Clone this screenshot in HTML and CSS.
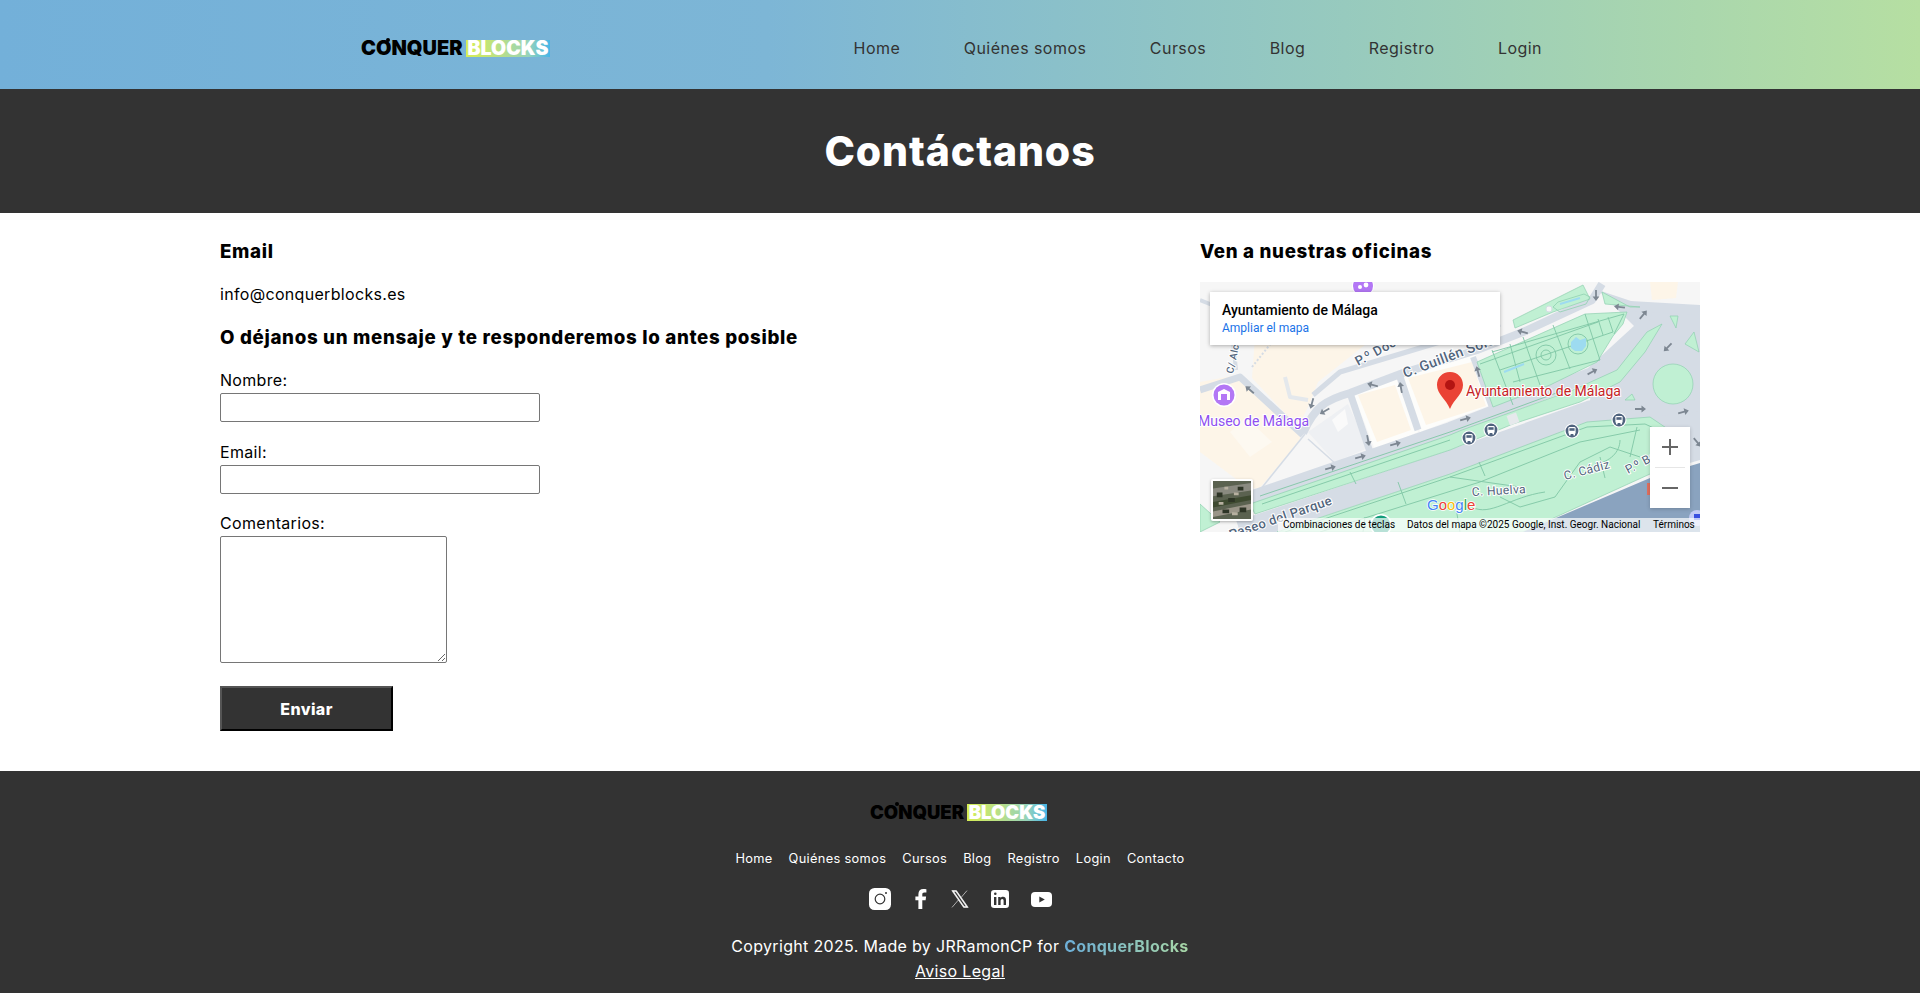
FILE: index.html
```html
<!DOCTYPE html>
<html lang="es">
<head>
    <title>Contacto - ConquerBlocks</title>
    <meta charset="UTF-8">
    <meta name="viewport" content="width=device-width, initial-scale=1.0">
    <link rel="stylesheet" href="styles.css">
</head>
<body>
    <header class="topbar">
        <a class="logo" href="#"><span class="logo-dark">CONQUER</span><span class="logo-box">BLOCKS</span></a>
        <nav class="main-nav">
            <a href="#">Home</a>
            <a href="#">Quiénes somos</a>
            <a href="#">Cursos</a>
            <a href="#">Blog</a>
            <a href="#">Registro</a>
            <a href="#">Login</a>
        </nav>
    </header>

    <div class="page-title">
        <h1>Contáctanos</h1>
    </div>

    <main class="content">
        <section class="contact-col">
            <h3>Email</h3>
            <p class="mail">info@conquerblocks.es</p>
            <h3 class="form-title">O déjanos un mensaje y te responderemos lo antes posible</h3>
            <form>
                <div class="field">
                    <label for="nombre">Nombre:</label>
                    <input id="nombre" type="text">
                </div>
                <div class="field">
                    <label for="email">Email:</label>
                    <input id="email" type="email">
                </div>
                <div class="field">
                    <label for="comentarios">Comentarios:</label>
                    <textarea id="comentarios"></textarea>
                </div>
                <button type="button" class="send">Enviar</button>
            </form>
        </section>

        <section class="office-col">
            <h3>Ven a nuestras oficinas</h3>
            <div class="map">
                <svg class="map-art" viewBox="0 0 500 250" width="500" height="250">
                    <defs>
                        <path id="arr" d="M-5 -.9H1.5V-3.4L6 0 1.5 3.4V.9H-5Z" fill="#7d8792"/>
                        <g id="bus">
                            <circle r="7.5" fill="#fff"/>
                            <circle r="6.4" fill="#4f637e"/>
                            <rect x="-3.6" y="-4" width="7.2" height="7" rx="1.2" fill="#fff"/>
                            <rect x="-2.6" y="-2.8" width="5.2" height="2.6" fill="#4f637e"/>
                            <rect x="-3" y="3" width="1.6" height="1.4" fill="#fff"/>
                            <rect x="1.4" y="3" width="1.6" height="1.4" fill="#fff"/>
                        </g>
                    </defs>

                    <rect width="500" height="250" fill="#f6f6f6"/>

                    <!-- manzanas -->
                    <polygon points="0,100 38,93 100,150 100,158 58,208 40,200 0,170" fill="#fdf5e8"/>
                    <polygon points="55,55 175,55 118,100 108,125 98,145 52,96" fill="#fdf5e8"/>
                    <polygon points="450,0 478,0 476,16 452,18" fill="#fdf5e8"/>
                    <polygon points="30,150 46,135 72,160 50,175" fill="#fdf9f1"/>
                    <polygon points="108,150 148,122 168,166 135,180" fill="#eef0f3"/>
                    <polygon points="132,138 145,127 148,142 138,150" fill="#fafafa"/>
                    <polygon points="152,108 198,96 218,150 175,168" fill="#fdfdfb"/>
                    <polygon points="158,113 195,103 211,148 177,160" fill="#fdf5e8"/>
                    <polygon points="203,92 275,72 293,122 220,150" fill="#fdfdfb"/>
                    <polygon points="208,96 272,80 286,124 226,143" fill="#fdf5e8"/>

                    <!-- calles -->
                    <g fill="none" stroke="#d5dce5" stroke-linejoin="round">
                        <polygon points="398,8 440,22 500,25 500,178 452,192 388,142 392,96 440,50" fill="#d5dce5" stroke="none"/>
                        <path d="M40 250 250 180 390 130 500 118" stroke-width="23"/>
                        <path d="M50 216 250 147 392 92 440 48 445 30" stroke-width="14"/>
                        <path d="M103 151C115 125 125 118 150 111L203 91 277 68 323 50 392 18 402 2" stroke-width="8"/>
                        <path d="M150 111 170 170" stroke-width="7"/>
                        <path d="M200 95 218 148" stroke-width="7"/>
                        <path d="M273 75 293 128" stroke-width="6"/>
                        <path d="M0 108 40 95 103 153" stroke-width="7"/>
                        <path d="M105 152 60 208" stroke-width="1.5"/>
                        <path d="M108 157 136 182" stroke-width="1.5"/>
                        <path d="M113 113 140 90 250 57 300 42" stroke-width="5"/>
                        <path d="M430 24 500 28" stroke-width="10"/>
                        <path d="M30 30 36 88" stroke-width="4"/>
                        <path d="M0 18 30 30" stroke-width="4"/>
                        <path d="M85 95 90 115 108 118" stroke-width="4" stroke="#e4e8ec"/>
                        <path d="M52 85 72 60" stroke-width="2" stroke-dasharray="2 2"/>
                    </g>

                    <!-- parques -->
                    <g fill="#c0f0d3" stroke="#8fd0b0" stroke-width=".7">
                        <polygon points="277,80 385,32 427,30 423,42 413,54 397,80 350,103 293,125"/>
                        <polygon points="313,38 383,3 390,17 353,30 315,46"/>
                        <polygon points="402,10 430,25 440,25 405,22"/>
                        <polygon points="462,42 447,50 417,88 373,108 262,148 250,153 50,222 55,232 250,168 313,142 380,120 420,100 445,70"/>
                        <polygon points="77,250 250,192 387,140 450,135 490,162 450,192 323,250"/>
                        <polygon points="0,222 20,240 0,250"/>
                        <polygon points="425,118 432,112 435,118"/>
                        <circle cx="473" cy="102" r="20"/>
                        <polygon points="485,62 494,50 499,70"/>
                        <polygon points="470,34 478,34 476,46"/>
                    </g>
                    <polygon points="323,250 450,196 500,181 500,250" fill="#8aa3bf"/>

                    <!-- sendas -->
                    <g fill="none" stroke="#7fc6a5" stroke-width=".9">
                        <path d="M292 70 424 32 414 52"/>
                        <path d="M280 82 398 40"/>
                        <path d="M300 88 413 50"/>
                        <path d="M313 100 400 78"/>
                        <path d="M292 68 313 123"/>
                        <path d="M310 62 320 100"/>
                        <path d="M323 55 340 103"/>
                        <path d="M353 43 370 87"/>
                        <path d="M385 32 400 78"/>
                        <path d="M398 37 403 53"/>
                        <path d="M408 35 413 50"/>
                        <circle cx="346" cy="73" r="10"/>
                        <circle cx="346" cy="73" r="5"/>
                        <circle cx="378" cy="62" r="10"/>
                        <path d="M60 214 250 150 370 106"/>
                        <path d="M62 222 250 158"/>
                        <path d="M150 190 156 202"/>
                        <path d="M85 250 250 195 387 145 445 142 480 158"/>
                        <path d="M120 250 280 200 380 160 440 148"/>
                        <path d="M163 250 165 235 M260 250 255 220 M300 215 320 225 355 215 380 180 410 165 440 175 M250 195 320 205 M405 196 400 175"/>
                        <path d="M420 158C420 170 410 180 395 182 M437 145 430 175"/>
                        <path d="M279 180 285 194 M198 200 206 222"/>
                        <path d="M272 225C290 235 310 215 345 210"/>
                    </g>
                    <g fill="none" stroke="#9ddbf0">
                        <path d="M304 90 324 82" stroke-width="2"/>
                        <path d="M360 22 380 16" stroke-width="2"/>
                    </g>
                    <path d="M371 60 376 55 380 58 386 56 386 64 382 69 375 69 371 66Z" fill="#9ddbf0"/>
                    <path d="M353 25 358 20 384 12 390 15 386 22 360 30Z" fill="none" stroke="#8fd0b0" stroke-width=".8"/>
                    <circle cx="349" cy="27" r="3" fill="#f6f6f6" stroke="#d5dce5"/>
                    <rect x="308" y="132" width="10" height="10" fill="#e6e9ec" transform="rotate(-20 313 137)"/>
                    <rect x="447" y="201" width="4" height="12" fill="#e0705f"/>
                    <circle cx="497" cy="236" r="8" fill="#c4cbf5"/>
                    <rect x="494" y="232" width="6" height="6" fill="#3b50e0"/>

                    <!-- flechas -->
                    <use href="#arr" transform="translate(173 103) rotate(195)"/>
                    <use href="#arr" transform="translate(201 106) rotate(-100)"/>
                    <use href="#arr" transform="translate(265 137) rotate(-15)"/>
                    <use href="#arr" transform="translate(392 90) rotate(-28)"/>
                    <use href="#arr" transform="translate(323 50) rotate(195)"/>
                    <use href="#arr" transform="translate(278 90) rotate(-105)"/>
                    <use href="#arr" transform="translate(420 25) rotate(188)"/>
                    <use href="#arr" transform="translate(443 33) rotate(-50)"/>
                    <use href="#arr" transform="translate(396 13) rotate(90)"/>
                    <use href="#arr" transform="translate(468 65) rotate(135)"/>
                    <use href="#arr" transform="translate(440 127)"/>
                    <use href="#arr" transform="translate(483 130) rotate(-15)"/>
                    <use href="#arr" transform="translate(497 160) rotate(50)"/>
                    <use href="#arr" transform="translate(168 158) rotate(80)"/>
                    <use href="#arr" transform="translate(195 162) rotate(-15)"/>
                    <use href="#arr" transform="translate(160 175) rotate(-15)"/>
                    <use href="#arr" transform="translate(130 186) rotate(-15)"/>
                    <use href="#arr" transform="translate(125 129) rotate(150)"/>
                    <use href="#arr" transform="translate(112 121) rotate(105)"/>
                    <use href="#arr" transform="translate(50 108) rotate(220)"/>

                    <!-- rotulos -->
                    <text class="map-street big" x="205" y="96" transform="rotate(-20.7 205 96)">C. Guillén Soler</text>
                    <text class="map-street" x="158" y="84" transform="rotate(-28 158 84)">P.º Doctor</text>
                    <text class="map-street small" x="33" y="92" transform="rotate(-78 33 92)">C/ Alcazabilla</text>
                    <text class="map-street" x="133" y="222" text-anchor="end" transform="rotate(-19 133 222)">Paseo del Parque</text>
                    <text class="map-street light" x="272" y="214" transform="rotate(-3 272 214)">C. Huelva</text>
                    <text class="map-street light" x="365" y="198" transform="rotate(-15 365 198)">C. Cádiz</text>
                    <text class="map-street light" x="428" y="192" transform="rotate(-28 428 192)">P.º Bajo</text>
                    <text class="map-label red" x="266" y="114">Ayuntamiento de Málaga</text>
                    <text class="map-label purple" x="-2" y="144">Museo de Málaga</text>

                    <!-- pines -->
                    <circle cx="24" cy="113" r="12" fill="#fff"/>
                    <circle cx="24" cy="113" r="10.5" fill="#b377f5"/>
                    <path d="M18 110 24 107 30 110V118H18Z" fill="#fff"/>
                    <rect x="21" y="112" width="6" height="6" fill="#b377f5"/>
                    <circle cx="163" cy="4" r="11" fill="#fff"/>
                    <circle cx="163" cy="4" r="10" fill="#b377f5"/>
                    <circle cx="160" cy="5" r="2" fill="#fff"/>
                    <circle cx="166" cy="3" r="2.4" fill="#fff"/>
                    <path d="M250 90C242 90 237 96 237 103 237 112 246 117 250 127 254 117 263 112 263 103 263 96 258 90 250 90Z" fill="#ea4335"/>
                    <circle cx="250" cy="103" r="5" fill="#b31412"/>
                    <use href="#bus" x="269" y="156"/>
                    <use href="#bus" x="291" y="148"/>
                    <use href="#bus" x="372" y="149"/>
                    <use href="#bus" x="419" y="138"/>
                    <circle cx="181" cy="243" r="11" fill="#fff"/>
                    <circle cx="181" cy="243" r="9.5" fill="#129c7a"/>
                    <text class="map-google" x="227" y="228"><tspan fill="#4285f4">G</tspan><tspan fill="#ea4335">o</tspan><tspan fill="#fbbc05">o</tspan><tspan fill="#4285f4">g</tspan><tspan fill="#34a853">l</tspan><tspan fill="#ea4335">e</tspan></text>
                </svg>

                <div class="map-card">
                    <strong>Ayuntamiento de Málaga</strong>
                    <a href="#">Ampliar el mapa</a>
                </div>

                <div class="map-thumb">
                    <svg viewBox="0 0 40 40" width="38" height="38">
                        <rect width="40" height="40" fill="#5b6250"/>
                        <path d="M0 8 40 2V10L0 16Z" fill="#8a8a80"/>
                        <path d="M0 22 40 15V20L0 28Z" fill="#3e4a30"/>
                        <path d="M0 32 40 24V30L0 38Z" fill="#9a9588"/>
                        <path d="M4 12h6v5H4ZM16 18h7v4h-7ZM26 6h6v4h-6ZM10 30h7v4h-7ZM28 28h7v5h-7Z" fill="#2e3526"/>
                        <path d="M12 6h4v3h-4ZM22 12h5v3h-5ZM6 22h5v3H6ZM20 33h6v3h-6Z" fill="#b7b0a0"/>
                    </svg>
                </div>

                <div class="map-zoom">
                    <button type="button" aria-label="Acercar">
                        <svg viewBox="0 0 18 18" width="18" height="18"><path d="M8 1h2v7h7v2h-7v7H8v-7H1V8h7Z" fill="#666"/></svg>
                    </button>
                    <span class="map-zoom-sep"></span>
                    <button type="button" aria-label="Alejar">
                        <svg viewBox="0 0 18 18" width="18" height="18"><path d="M1 8h16v2H1Z" fill="#666"/></svg>
                    </button>
                </div>

                <div class="map-attr">
                    <span class="attr-keys">Combinaciones de teclas</span>
                    <span class="attr-data">Datos del mapa ©2025 Google, Inst. Geogr. Nacional</span>
                    <span class="attr-terms">Términos</span>
                </div>
            </div>
        </section>
    </main>

    <footer class="site-footer">
        <a class="logo logo-small" href="#"><span class="logo-dark">CONQUER</span><span class="logo-box">BLOCKS</span></a>
        <nav class="footer-nav">
            <a href="#">Home</a>
            <a href="#">Quiénes somos</a>
            <a href="#">Cursos</a>
            <a href="#">Blog</a>
            <a href="#">Registro</a>
            <a href="#">Login</a>
            <a href="#">Contacto</a>
        </nav>
        <div class="social">
            <a href="#" aria-label="Instagram">
                <svg viewBox="0 0 22 22" width="22" height="22"><rect width="22" height="22" rx="5.5" fill="#fff"/><circle cx="11" cy="11" r="4.8" fill="none" stroke="#333" stroke-width="1.2"/><circle cx="17" cy="5" r="1" fill="#333"/></svg>
            </a>
            <a href="#" aria-label="Facebook">
                <svg viewBox="0 0 12 20" width="12" height="20"><path d="M3.4 20V11.2H.4V7.6h3V5.2C3.4 1.9 5.3 0 8.3 0c1.4 0 2.7.1 3.1.2v3.3H9.300c-1.500 0-2 .8-2 2v2.100h3.800l-.5 3.600H7.300V20Z" fill="#fff"/></svg>
            </a>
            <a href="#" aria-label="X">
                <svg viewBox="0 0 18 18" width="18" height="18"><path d="M.8.6H5.400L17.200 17.400H12.600ZM2.700 1.600 13.100 16.400H15.300L4.900 1.600ZM16 .6 10.200 7.400M1 17.400 7.400 10" fill="#fff" fill-rule="evenodd" stroke="#fff" stroke-width=".6"/></svg>
            </a>
            <a href="#" aria-label="LinkedIn">
                <svg viewBox="0 0 18 18" width="18" height="18"><rect width="18" height="18" rx="3.200" fill="#fff"/><path d="M3 7h2.400v8H3ZM3 3.700a1.300 1.300 0 1 1 2.600 0 1.300 1.300 0 0 1-2.600 0ZM7.200 7h2.300v1.100C10 7.300 11 6.800 12 6.800c2.200 0 3 1.400 3 3.600V15h-2.400v-4.100c0-1.200-.4-1.900-1.300-1.900-1 0-1.700.7-1.700 2V15H7.200Z" fill="#333"/></svg>
            </a>
            <a href="#" aria-label="YouTube">
                <svg viewBox="0 0 21 15" width="21" height="15"><rect width="21" height="15" rx="4" fill="#fff"/><path d="M8.300 4.400 13.800 7.500 8.300 10.600Z" fill="#333"/></svg>
            </a>
        </div>
        <p class="copy">Copyright 2025. Made by JRRamonCP for <span class="brand">ConquerBlocks</span></p>
        <a class="legal" href="#">Aviso Legal</a>
    </footer>
</body>
</html>
```

FILE: styles.css
```css
* {
    box-sizing: border-box;
}
html, body {
    margin: 0;
    padding: 0;
}
body {
    font-family: Inter, "Open Sans", sans-serif;
    font-size: 16px;
    line-height: 24px;
    letter-spacing: .32px;
    color: #000;
    background: #fff;
}
a {
    color: inherit;
    text-decoration: none;
}

/* cabecera */
.topbar {
    height: 89px;
    padding: 7px 378px 0 361px;
    display: flex;
    align-items: center;
    justify-content: space-between;
    background: linear-gradient(90deg, #73b0d9 0%, #7db6d6 40%, #97cabe 70%, #b6dfa2 100%);
}
.main-nav {
    display: flex;
    gap: 63.5px;
    color: #333;
    letter-spacing: .45px;
}

/* logo */
.logo {
    position: relative;
    display: flex;
    align-items: center;
    height: 17px;
    font-family: Inter, sans-serif;
    font-weight: 900;
    font-size: 20px;
    line-height: 17px;
    letter-spacing: 0;
}
.logo::before {
    content: "";
    position: absolute;
    left: 25px;
    top: -2px;
    width: 4px;
    height: 4px;
    border-radius: 50%;
    background: #000;
}
.logo-dark {
    color: #000;
    width: 105px;
}
.logo-box {
    width: 84px;
    height: 17px;
    color: #fff;
    text-align: center;
    font-size: 19.5px;
    letter-spacing: 0;
    background: linear-gradient(90deg, #d6ee55 0%, #b4dd8e 45%, #96d3bb 75%, #47b5e8 100%);
}
.logo-small {
    margin-right: 3px;
    font-size: 18.5px;
}
.logo-small .logo-dark {
    width: 97px;
}
.logo-small .logo-box {
    width: 80px;
    font-size: 18.5px;
}

/* titulo */
.page-title {
    height: 124px;
    display: flex;
    align-items: center;
    justify-content: center;
    background: #333;
}
.page-title h1 {
    margin: 0;
    color: #fff;
    font-size: 41px;
    line-height: 60px;
    font-weight: 800;
    letter-spacing: .9px;
}

/* contenido */
.content {
    height: 558px;
    padding: 25px 220px 0;
    display: flex;
}
.contact-col {
    width: 980px;
}
.office-col {
    width: 500px;
}
h3 {
    margin: 0;
    font-size: 18.72px;
    line-height: 28px;
    font-weight: 800;
    letter-spacing: .68px;
}
.mail {
    margin: 16px 0 18px;
}
.field {
    margin-bottom: 17.5px;
}
.field label {
    display: block;
    height: 25px;
}
.field:first-child {
    margin-top: 16px;
}
input {
    display: block;
    width: 320px;
    height: 29px;
    border: 1px solid #767676;
    border-radius: 2px;
    background: #fff;
}
textarea {
    display: block;
    width: 227px;
    height: 127px;
    border: 1px solid #767676;
    border-radius: 2px;
    background: #fff;
}
.send {
    display: block;
    width: 173px;
    height: 45px;
    margin-top: 23px;
    color: #fff;
    background: #333;
    border: 2px outset #000;
    border-color: #555 #000 #000 #555;
    font: 800 16px Inter, sans-serif;
    letter-spacing: .4px;
}

/* mapa */
.map {
    position: relative;
    width: 500px;
    height: 250px;
    margin-top: 16px;
    overflow: hidden;
    font-family: Roboto, sans-serif;
    letter-spacing: 0;
}
.map-art {
    display: block;
}
.map-street {
    font: 500 13px Roboto, sans-serif;
    fill: #52657c;
    stroke: #fff;
    stroke-width: 2px;
    paint-order: stroke;
    letter-spacing: .4px;
}
.map-street.big {
    font-size: 14px;
}
.map-street.small {
    font-size: 10px;
}
.map-street.light {
    font-size: 12px;
    font-weight: 400;
}
.map-label {
    font: 400 14px Roboto, sans-serif;
    stroke: #fff;
    stroke-width: 2px;
    paint-order: stroke;
}
.map-label.red {
    fill: #c5221f;
}
.map-label.purple {
    fill: #8f4ff0;
}
.map-google {
    font: 400 15px "Liberation Sans", sans-serif;
    stroke: #fff;
    stroke-width: 1.5px;
    paint-order: stroke;
}
.map-card {
    position: absolute;
    left: 10px;
    top: 10px;
    width: 290px;
    height: 53px;
    padding: 9px 12px;
    display: flex;
    flex-direction: column;
    background: #fff;
    box-shadow: 0 1px 4px rgba(0,0,0,0.3);
}
.map-card strong {
    font-size: 14px;
    line-height: 19px;
    font-weight: 500;
}
.map-card a {
    font-size: 12px;
    line-height: 16px;
    color: #1a73e8;
}
.map-thumb {
    position: absolute;
    left: 11px;
    top: 197px;
    width: 42px;
    height: 42px;
    border: 2px solid #fff;
    border-radius: 2px;
    box-shadow: 0 1px 3px rgba(0,0,0,0.3);
}
.map-thumb svg {
    display: block;
}
.map-zoom {
    position: absolute;
    left: 450px;
    top: 145px;
    width: 40px;
    height: 81px;
    display: flex;
    flex-direction: column;
    align-items: center;
    background: #fff;
    box-shadow: 0 1px 4px rgba(0,0,0,0.2);
}
.map-zoom button {
    width: 40px;
    height: 40px;
    padding: 0;
    border: 0;
    background: none;
    display: flex;
    align-items: center;
    justify-content: center;
}
.map-zoom-sep {
    width: 30px;
    height: 1px;
    background: #e6e6e6;
}
.map-attr {
    position: absolute;
    left: 78px;
    right: 0;
    bottom: 0;
    height: 14px;
    padding-left: 5px;
    display: flex;
    font-size: 10px;
    line-height: 14px;
    background: rgba(255,255,255,0.7);
    white-space: nowrap;
}
.attr-keys {
    width: 124px;
}
.attr-data {
    width: 246px;
}

/* pie */
.site-footer {
    height: 222px;
    padding-top: 33px;
    display: flex;
    flex-direction: column;
    align-items: center;
    color: #fff;
    background: #333;
}
.footer-nav {
    display: flex;
    gap: 16px;
    margin-top: 28px;
    font-size: 12.8px;
    line-height: 20px;
    letter-spacing: .33px;
}
.social {
    display: flex;
    align-items: center;
    gap: 22px;
    height: 22px;
    margin-top: 19px;
}
.social a {
    display: flex;
}
.social a:nth-child(2) {
    margin: 0 2px;
}
.copy {
    margin: 24px 0 0;
    line-height: 25px;
}
.brand {
    font-weight: 700;
    background: linear-gradient(90deg, #6caed8, #a8d7a6);
    -webkit-background-clip: text;
    background-clip: text;
    color: transparent;
}
.legal {
    line-height: 25px;
    text-decoration: underline;
}
```
